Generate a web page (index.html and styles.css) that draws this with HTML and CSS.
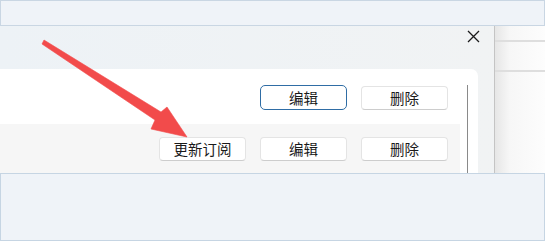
FILE: index.html
```html
<!DOCTYPE html>
<html lang="zh-CN">
<head>
<meta charset="utf-8">
<link rel="stylesheet" href="styles.css">
</head>
<body>
<div class="topbar"></div>
<div class="middle">
  <div class="dialog">
    <div class="dlg-header">
      <svg class="close" width="13" height="13" viewBox="0 0 13 13"><path d="M1 1 L12 12 M12 1 L1 12" stroke="#1b1b1b" stroke-width="1.3" fill="none"/></svg>
    </div>
    <div class="card">
      <div class="list">
        <div class="row row-a">
          <button class="btn btn-focus">编辑</button>
          <button class="btn">删除</button>
        </div>
        <div class="row row-b">
          <button class="btn">更新订阅</button>
          <button class="btn">编辑</button>
          <button class="btn">删除</button>
        </div>
      </div>
      <div class="scroll"><div class="scroll-line"></div></div>
    </div>
  </div>
  <div class="side">
    <div class="side-line l1"></div>
    <div class="side-line l2"></div>
  </div>
</div>
<div class="bottombar"></div>
<svg class="arrow" width="545" height="241" viewBox="0 0 545 241">
  <polygon points="43,42 44,40 161,112 167,107 187,137 151,129 155,120 42,44" fill="#f24b4b" stroke="#f24b4b" stroke-width="0.6" stroke-linejoin="round"/>
</svg>
</body>
</html>
```
FILE: styles.css
```css
html, body {
  margin: 0;
  padding: 0;
}
body {
  width: 545px;
  height: 241px;
  overflow: hidden;
  position: relative;
  font-family: "Noto Sans CJK SC", "Noto Sans", sans-serif;
  background: #fff;
}
.topbar {
  height: 24px;
  background: #eff3f8;
  border: 1px solid #c9d6e3;
}
.middle {
  display: flex;
  height: 147px;
}
.dialog {
  width: 494px;
  border-right: 1px solid #c4c4c4;
  background: linear-gradient(to right, #edf2f6, #f1f3f4);
  display: flex;
  flex-direction: column;
}
.dlg-header {
  height: 43px;
  display: flex;
  justify-content: flex-end;
  align-items: flex-start;
  padding-right: 14px;
  box-sizing: border-box;
  padding-top: 4px;
}
.card {
  flex: 1;
  width: 478px;
  background: #fff;
  border-top-right-radius: 7px;
  display: flex;
}
.list {
  width: 460px;
}
.row {
  display: flex;
  justify-content: flex-end;
  align-items: center;
  gap: 14px;
  padding-right: 12px;
  box-sizing: border-box;
}
.row-a {
  height: 55px;
  background: #fff;
  padding-top: 2px;
}
.row-b {
  height: 49px;
  background: #f6f6f6;
}
.btn {
  width: 87px;
  height: 24px;
  padding: 0;
  margin: 0;
  font-family: "Noto Sans CJK SC", "Noto Sans", sans-serif;
  font-size: 14.5px;
  line-height: 22px;
  color: #1a1a1a;
  background: #fff;
  border: 1px solid #e4e4e4;
  border-bottom-color: #cdcdcd;
  border-radius: 4px;
  box-sizing: border-box;
}
.btn-focus {
  border: 1.5px solid #2f6da5;
  border-radius: 5px;
  height: 25px;
}
.scroll {
  flex: 1;
  display: flex;
  justify-content: center;
  padding-top: 16px;
}
.scroll-line {
  width: 1px;
  background: #8a8a8a;
  margin-left: -4px;
}
.side {
  flex: 1;
  position: relative;
  background: linear-gradient(to right, #e6e6e6, #f7f7f7 30%, #fdfdfd);
}
.side-line {
  height: 2px;
  background: #dedede;
}
.l1 {
  margin-top: 14px;
}
.l2 {
  margin-top: 28px;
}
.bottombar {
  height: 66px;
  background: #eff3f8;
  border: 1px solid #c6d5e3;
}
.arrow {
  position: absolute;
  left: 0;
  top: 0;
  pointer-events: none;
}
```
